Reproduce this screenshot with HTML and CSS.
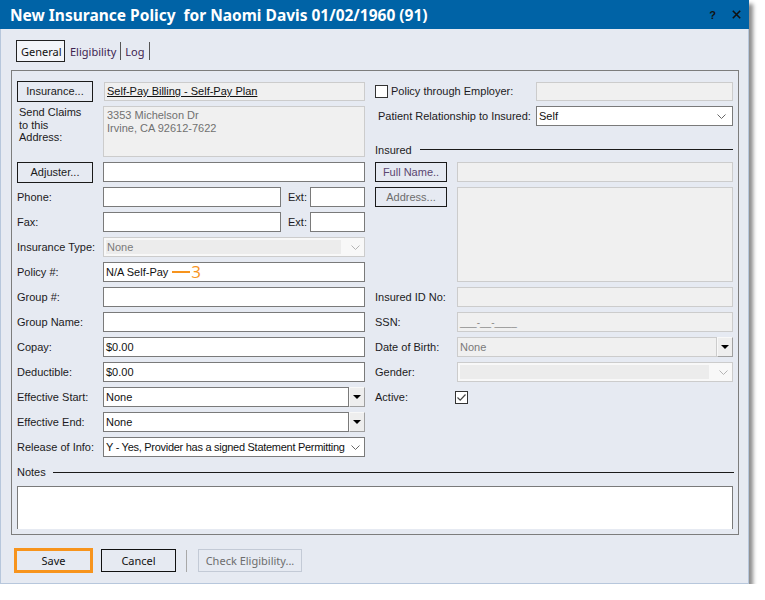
FILE: index.html
```html
<!DOCTYPE html>
<html>
<head>
<meta charset="utf-8">
<link rel="stylesheet" href="styles.css">
</head>
<body>
<div class="window">
  <div class="titlebar">
    <span class="title">New Insurance Policy&nbsp; for Naomi Davis 01/02/1960 (91)</span>
    <span class="tb-btns">
      <span class="help">?</span>
      <svg class="close" width="9" height="9" viewBox="0 0 9 9"><path d="M0.8 0.8 L8.2 8.2 M8.2 0.8 L0.8 8.2" stroke="#111" stroke-width="1.6" fill="none"/></svg>
    </span>
  </div>
  <div class="content">
    <div class="tabs">
      <span class="tab active">General</span>
      <span class="tab elig">Eligibility</span>
      <span class="tab log">Log</span>
    </div>
    <div class="panel">
      <div class="cols">
        <div class="col-left">
          <div class="row">
            <span class="btn ins-btn">Insurance...</span>
            <span class="inp dis ins-name"><u>Self-Pay Billing - Self-Pay Plan</u></span>
          </div>
          <div class="addr-block">
            <span class="lbl claims">Send Claims<br>to this<br>Address:</span>
            <span class="addr-box">3353 Michelson Dr<br>Irvine, CA 92612-7622</span>
          </div>
          <div class="row">
            <span class="btn ins-btn">Adjuster...</span>
            <span class="inp adj"></span>
          </div>
          <div class="row">
            <span class="lbl">Phone:</span>
            <span class="inp phone"></span>
            <span class="lbl ext">Ext:</span>
            <span class="inp extinp"></span>
          </div>
          <div class="row">
            <span class="lbl">Fax:</span>
            <span class="inp phone"></span>
            <span class="lbl ext">Ext:</span>
            <span class="inp extinp"></span>
          </div>
          <div class="row">
            <span class="lbl">Insurance Type:</span>
            <span class="combo dis"><span class="combo-txt">None</span><svg width="9" height="5" viewBox="0 0 9 5"><path d="M0.5 0.5 L4.5 4.5 L8.5 0.5" fill="none" stroke="#b4b4b4"/></svg></span>
          </div>
          <div class="row">
            <span class="lbl">Policy #:</span>
            <span class="inp grow">N/A Self-Pay<span class="anno-line"></span><span class="anno-num">3</span></span>
          </div>
          <div class="row">
            <span class="lbl">Group #:</span>
            <span class="inp grow"></span>
          </div>
          <div class="row">
            <span class="lbl">Group Name:</span>
            <span class="inp grow"></span>
          </div>
          <div class="row">
            <span class="lbl">Copay:</span>
            <span class="inp grow">$0.00</span>
          </div>
          <div class="row">
            <span class="lbl">Deductible:</span>
            <span class="inp grow">$0.00</span>
          </div>
          <div class="row">
            <span class="lbl">Effective Start:</span>
            <span class="inp grow">None</span>
            <span class="dd-btn"><span class="tri"></span></span>
          </div>
          <div class="row">
            <span class="lbl">Effective End:</span>
            <span class="inp grow">None</span>
            <span class="dd-btn"><span class="tri"></span></span>
          </div>
          <div class="row">
            <span class="lbl">Release of Info:</span>
            <span class="combo release"><span class="combo-txt">Y - Yes, Provider has a signed Statement Permitting</span><svg width="9" height="5" viewBox="0 0 9 5"><path d="M0.5 0.5 L4.5 4.5 L8.5 0.5" fill="none" stroke="#666"/></svg></span>
          </div>
        </div>
        <div class="col-right">
          <div class="row">
            <span class="chk"></span>
            <span class="lbl emp">Policy through Employer:</span>
            <span class="inp dis emp-inp"></span>
          </div>
          <div class="row">
            <span class="lbl rel">Patient Relationship to Insured:</span>
            <span class="combo rel-combo"><span class="combo-txt">Self</span><svg width="9" height="5" viewBox="0 0 9 5"><path d="M0.5 0.5 L4.5 4.5 L8.5 0.5" fill="none" stroke="#666"/></svg></span>
          </div>
          <div class="heading insured-h">
            <span>Insured</span><span class="hline"></span>
          </div>
          <div class="row">
            <span class="btn r-btn fullname">Full Name..</span>
            <span class="inp dis grow"></span>
          </div>
          <div class="row addr-row">
            <span class="btn r-btn disabled-txt">Address...</span>
            <span class="inp dis grow tall"></span>
          </div>
          <div class="row">
            <span class="lbl rlbl">Insured ID No:</span>
            <span class="inp dis grow"></span>
          </div>
          <div class="row">
            <span class="lbl rlbl">SSN:</span>
            <span class="inp dis grow ssn">___-__-____</span>
          </div>
          <div class="row">
            <span class="lbl rlbl">Date of Birth:</span>
            <span class="inp dis grow gray">None</span>
            <span class="dd-btn"><span class="tri"></span></span>
          </div>
          <div class="row">
            <span class="lbl rlbl">Gender:</span>
            <span class="combo dis"><span class="combo-txt"></span><svg width="9" height="5" viewBox="0 0 9 5"><path d="M0.5 0.5 L4.5 4.5 L8.5 0.5" fill="none" stroke="#b4b4b4"/></svg></span>
          </div>
          <div class="row">
            <span class="lbl active-lbl">Active:</span>
            <span class="chk checked"><svg width="11" height="11" viewBox="0 0 11 11"><path d="M1.5 5.5 L4.2 8.2 L9.5 2.5" fill="none" stroke="#444" stroke-width="1.2"/></svg></span>
          </div>
        </div>
      </div>
      <div class="heading notes-h">
        <span>Notes</span><span class="hline"></span>
      </div>
      <div class="notes-box"></div>
    </div>
    <div class="footer">
      <span class="fbtn save">Save</span>
      <span class="fbtn cancel">Cancel</span>
      <span class="fsep"></span>
      <span class="fbtn check">Check Eligibility...</span>
    </div>
  </div>
</div>
</body>
</html>
```

FILE: styles.css
```css
* { box-sizing: border-box; }
html, body { margin: 0; padding: 0; background: #ffffff; }
body {
  font-family: "Liberation Sans", Arial, sans-serif;
  font-size: 11px;
  color: #1c1a22;
}
.window {
  width: 749px;
  height: 584px;
  display: flex;
  flex-direction: column;
  box-shadow: 4px 4px 4px rgba(0, 0, 0, 0.45);
}
.titlebar {
  flex: none;
  height: 29px;
  background: #0063a6;
  color: #ffffff;
  display: flex;
  align-items: center;
  padding: 0 8px 0 10px;
}
.title {
  flex: 1;
  font-family: "Noto Sans", "Open Sans", sans-serif;
  font-weight: 700;
  font-size: 15.5px;
  white-space: nowrap;
}
.tb-btns { display: flex; align-items: center; }
.help {
  font-family: "Liberation Sans", Arial, sans-serif;
  font-weight: 700;
  font-size: 11px;
  color: #111;
  margin-right: 16px;
}
.close { display: block; }
.content {
  flex: 1;
  background: #e6eaf2;
  border: 1px solid #b7c7dc;
  border-top: none;
  padding: 11px 9px 0 10px;
}
.tabs {
  display: flex;
  align-items: center;
  height: 22px;
  margin-left: 5px;
  font-family: "Noto Sans", "Open Sans", sans-serif;
  font-size: 11px;
}
.tab {
  display: flex;
  align-items: center;
  color: #3d2350;
}
.tab.active {
  height: 22px;
  width: 49px;
  padding-left: 4px;
  border: 1px solid #222;
  background: #f3f5f9;
  color: #111;
}
.tab.elig, .tab.log {
  height: 18px;
  border-right: 1px solid #555;
}
.tab.elig { padding: 0 4px 0 5px; }
.tab.log { padding: 0 5px 0 4px; }
.panel {
  margin-top: 8px;
  width: 728px;
  height: 465px;
  border: 1px solid #7d7d7d;
  padding: 10px 4px 4px 5px;
}
.cols { display: flex; gap: 10px; }
.col-left {
  width: 348px;
  display: flex;
  flex-direction: column;
  gap: 5px;
}
.col-right {
  width: 358px;
  display: flex;
  flex-direction: column;
  gap: 5px;
}
.row {
  display: flex;
  align-items: center;
  height: 20px;
  flex: none;
}
.lbl {
  width: 86px;
  flex: none;
  white-space: nowrap;
}
.inp {
  height: 20px;
  border: 1px solid #7a7a7a;
  background: #ffffff;
  display: flex;
  align-items: center;
  padding: 0 2px;
  white-space: nowrap;
  color: #111;
}
.inp.dis {
  background: #f0f0f0;
  border-color: #cccccc;
}
.grow { flex: 1; }
.btn {
  height: 21px;
  border: 1px solid #1a1a1a;
  display: flex;
  align-items: center;
  justify-content: center;
  flex: none;
  color: #1a1a1a;
}
.ins-btn { width: 76px; }
.ins-name {
  margin-left: 11px;
  flex: 1;
  height: 19px;
}
.ins-name u { text-underline-offset: 1px; }
.addr-block {
  display: flex;
  height: 51px;
  flex: none;
}
.claims {
  padding-left: 2px;
  line-height: 12.5px;
}
.addr-box {
  flex: 1;
  height: 51px;
  background: #f0f0f0;
  border: 1px solid #cccccc;
  color: #707070;
  padding: 2px 3px;
  line-height: 13px;
}
.adj { margin-left: 10px; flex: 1; }
.phone { width: 178px; }
.ext {
  width: 22px;
  margin-left: 7px;
}
.extinp { width: 55px; }
.combo {
  flex: 1;
  height: 20px;
  border: 1px solid #7a7a7a;
  background: #ffffff;
  display: flex;
  align-items: center;
  padding: 0 6px 0 2px;
  white-space: nowrap;
  overflow: hidden;
}
.combo-txt {
  flex: 1;
  overflow: hidden;
  color: #111;
}
.release { padding-right: 4px; }
.release .combo-txt { letter-spacing: -0.28px; }
.combo svg { flex: none; margin-left: 3px; }
.combo.dis {
  border-color: #cccccc;
  background: #f8f8f8;
  padding: 2px 4px 2px 2px;
}
.combo.dis .combo-txt {
  background: #ececec;
  color: #7a7a7a;
  height: 14px;
  line-height: 14px;
  padding-left: 1px;
  margin-right: 7px;
}
.anno-line {
  display: inline-block;
  width: 18px;
  height: 2px;
  background: #f7941d;
  margin-left: 4px;
}
.anno-num {
  font-family: "Open Sans", "Noto Sans", sans-serif;
  font-size: 17px;
  color: #f7941d;
  margin-left: 1px;
  line-height: 18px;
}
.dd-btn {
  width: 16px;
  height: 20px;
  flex: none;
  background: #eeeeee;
  border: 1px solid #a0a0a0;
  border-top-color: #f8f8f8;
  border-left-color: #f8f8f8;
  display: flex;
  align-items: center;
  justify-content: center;
}
.tri {
  width: 0;
  height: 0;
  border-left: 4px solid transparent;
  border-right: 4px solid transparent;
  border-top: 4px solid #000;
}
.chk {
  width: 13px;
  height: 13px;
  flex: none;
  border: 1px solid #333;
  background: #ffffff;
  display: flex;
  align-items: center;
  justify-content: center;
}
.emp { width: auto; margin-left: 3px; }
.emp-inp { width: 197px; height: 19px; margin-left: auto; }
.rel { width: auto; padding-left: 3px; }
.rel-combo { flex: none; width: 197px; margin-left: auto; }
.heading {
  display: flex;
  align-items: center;
  flex: none;
}
.hline {
  flex: 1;
  height: 1px;
  background: #1a1a1a;
}
.insured-h {
  height: 26px;
  padding-top: 12px;
}
.insured-h .hline { margin-left: 8px; margin-top: -2px; }
.r-btn { width: 72px; height: 20px; margin-right: 10px; }
.fullname { color: #5a4670; }
.disabled-txt { color: #6d6d6d; }
.addr-row { height: 95px; align-items: flex-start; }
.tall { height: 95px; }
.rlbl { width: 82px; }
.ssn { color: #8a8a8a; font-size: 10px; }
.gray { color: #7a7a7a; }
.active-lbl { width: 80px; }
.checked { background: #ffffff; }
.notes-h {
  margin-top: 5px;
  height: 20px;
}
.notes-h .hline { margin-left: 7px; }
.notes-box {
  margin-top: 4px;
  height: 43px;
  width: 716px;
  background: #ffffff;
  border: 1px solid #7a7a7a;
  border-bottom: none;
}
.footer {
  display: flex;
  align-items: center;
  margin-top: 13px;
  padding-left: 3px;
  font-family: "Noto Sans", "Open Sans", sans-serif;
  font-size: 11px;
}
.fbtn {
  display: flex;
  align-items: center;
  justify-content: center;
  height: 23px;
  border: 1px solid #111;
  color: #111;
}
.save {
  width: 79px;
  height: 25px;
  border: 3px solid #f7941d;
}
.cancel { width: 75px; margin-left: 8px; }
.fsep {
  width: 1px;
  height: 22px;
  background: #a8a8a8;
  margin-left: 10px;
}
.check {
  width: 104px;
  margin-left: 11px;
  border-color: #c3cad6;
  color: #6d6d6d;
}
```
